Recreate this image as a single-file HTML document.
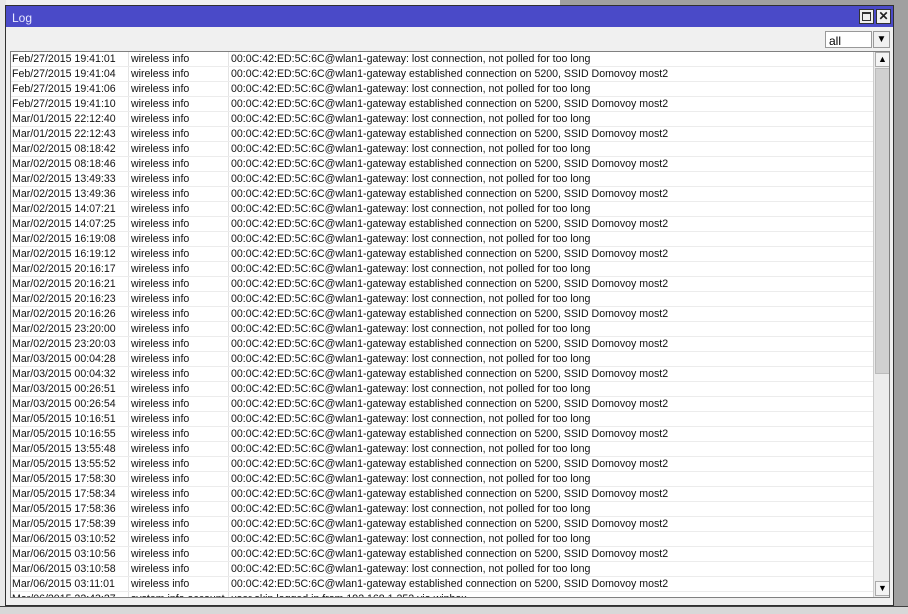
<!DOCTYPE html>
<html><head><meta charset="utf-8"><style>
*{margin:0;padding:0;box-sizing:border-box}
body{width:908px;height:614px;overflow:hidden;background:#a0a0a0;font-family:"Liberation Sans",sans-serif;font-size:10.6px;position:relative}
.under{position:absolute;left:0;top:0;width:560px;height:6px;background:#f0f0f0}
.under2{position:absolute;left:0;top:0;width:6px;height:614px;background:#e8e8e8}
.bot{position:absolute;left:0;top:606px;width:908px;height:8px;background:#d8d8d8;border-top:1px solid #404040}
.win{position:absolute;left:5px;top:5px;width:889px;height:601px;background:#f0f0f0;border:1px solid #303030}
.title{position:absolute;left:0;top:0;width:887px;height:21px;background:#4a4ac8;color:#e8e8ff;font-size:12px;padding:5px 0 0 6px}
.tb{position:absolute;top:3px;width:15px;height:15px;background:#f0f0f0;border:1px solid #333}
.sel{position:absolute;left:819px;top:25px;width:47px;height:17px;background:#fff;border:1px solid #999;font-size:12px;padding:2px 0 0 3px}
.selb{position:absolute;left:867px;top:25px;width:17px;height:17px;background:#f0f0f0;border:1px solid #999;font-size:10px;text-align:center;line-height:15px}
.list{position:absolute;left:4px;top:45px;width:880px;height:547px;background:#fff;border:1px solid #808080;overflow:hidden}
.row{height:15px;border-bottom:1px solid #ececec;white-space:nowrap;position:relative;line-height:14px;color:#111}
.row span{position:absolute;top:0}
.a{left:1px}.b{left:117px;border-left:1px solid #e4e4e4;padding-left:2px;height:14px}.c{left:217px;border-left:1px solid #e4e4e4;padding-left:2px;height:14px}
.sb{position:absolute;left:862px;top:0;width:17px;height:545px;background:#ececec;border-left:1px solid #ccc}
.thumb{position:absolute;left:1px;top:16px;width:15px;height:306px;background:#d0d0d0;border:1px solid #bbb}
.arr{position:absolute;left:1px;width:15px;height:15px;background:#f4f4f4;border:1px solid #aaa;font-size:9px;text-align:center;line-height:13px}
</style></head><body>
<div class="under"></div><div class="under2"></div><div class="bot"></div>
<div class="win">
<div class="title">Log
<div class="tb" style="left:853px"><div style="position:absolute;left:2px;top:2px;width:9px;height:9px;border:1px solid #333;border-top-width:2px"></div></div>
<div class="tb" style="left:870px;color:#222;font-size:12px;font-weight:bold;text-align:center;line-height:13px">✕</div>
</div>
<div class="sel">all</div><div class="selb">▼</div>
<div class="list">
<div class="row"><span class="a">Feb/27/2015 19:41:01</span><span class="b">wireless info</span><span class="c">00:0C:42:ED:5C:6C@wlan1-gateway: lost connection, not polled for too long</span></div>
<div class="row"><span class="a">Feb/27/2015 19:41:04</span><span class="b">wireless info</span><span class="c">00:0C:42:ED:5C:6C@wlan1-gateway established connection on 5200, SSID Domovoy most2</span></div>
<div class="row"><span class="a">Feb/27/2015 19:41:06</span><span class="b">wireless info</span><span class="c">00:0C:42:ED:5C:6C@wlan1-gateway: lost connection, not polled for too long</span></div>
<div class="row"><span class="a">Feb/27/2015 19:41:10</span><span class="b">wireless info</span><span class="c">00:0C:42:ED:5C:6C@wlan1-gateway established connection on 5200, SSID Domovoy most2</span></div>
<div class="row"><span class="a">Mar/01/2015 22:12:40</span><span class="b">wireless info</span><span class="c">00:0C:42:ED:5C:6C@wlan1-gateway: lost connection, not polled for too long</span></div>
<div class="row"><span class="a">Mar/01/2015 22:12:43</span><span class="b">wireless info</span><span class="c">00:0C:42:ED:5C:6C@wlan1-gateway established connection on 5200, SSID Domovoy most2</span></div>
<div class="row"><span class="a">Mar/02/2015 08:18:42</span><span class="b">wireless info</span><span class="c">00:0C:42:ED:5C:6C@wlan1-gateway: lost connection, not polled for too long</span></div>
<div class="row"><span class="a">Mar/02/2015 08:18:46</span><span class="b">wireless info</span><span class="c">00:0C:42:ED:5C:6C@wlan1-gateway established connection on 5200, SSID Domovoy most2</span></div>
<div class="row"><span class="a">Mar/02/2015 13:49:33</span><span class="b">wireless info</span><span class="c">00:0C:42:ED:5C:6C@wlan1-gateway: lost connection, not polled for too long</span></div>
<div class="row"><span class="a">Mar/02/2015 13:49:36</span><span class="b">wireless info</span><span class="c">00:0C:42:ED:5C:6C@wlan1-gateway established connection on 5200, SSID Domovoy most2</span></div>
<div class="row"><span class="a">Mar/02/2015 14:07:21</span><span class="b">wireless info</span><span class="c">00:0C:42:ED:5C:6C@wlan1-gateway: lost connection, not polled for too long</span></div>
<div class="row"><span class="a">Mar/02/2015 14:07:25</span><span class="b">wireless info</span><span class="c">00:0C:42:ED:5C:6C@wlan1-gateway established connection on 5200, SSID Domovoy most2</span></div>
<div class="row"><span class="a">Mar/02/2015 16:19:08</span><span class="b">wireless info</span><span class="c">00:0C:42:ED:5C:6C@wlan1-gateway: lost connection, not polled for too long</span></div>
<div class="row"><span class="a">Mar/02/2015 16:19:12</span><span class="b">wireless info</span><span class="c">00:0C:42:ED:5C:6C@wlan1-gateway established connection on 5200, SSID Domovoy most2</span></div>
<div class="row"><span class="a">Mar/02/2015 20:16:17</span><span class="b">wireless info</span><span class="c">00:0C:42:ED:5C:6C@wlan1-gateway: lost connection, not polled for too long</span></div>
<div class="row"><span class="a">Mar/02/2015 20:16:21</span><span class="b">wireless info</span><span class="c">00:0C:42:ED:5C:6C@wlan1-gateway established connection on 5200, SSID Domovoy most2</span></div>
<div class="row"><span class="a">Mar/02/2015 20:16:23</span><span class="b">wireless info</span><span class="c">00:0C:42:ED:5C:6C@wlan1-gateway: lost connection, not polled for too long</span></div>
<div class="row"><span class="a">Mar/02/2015 20:16:26</span><span class="b">wireless info</span><span class="c">00:0C:42:ED:5C:6C@wlan1-gateway established connection on 5200, SSID Domovoy most2</span></div>
<div class="row"><span class="a">Mar/02/2015 23:20:00</span><span class="b">wireless info</span><span class="c">00:0C:42:ED:5C:6C@wlan1-gateway: lost connection, not polled for too long</span></div>
<div class="row"><span class="a">Mar/02/2015 23:20:03</span><span class="b">wireless info</span><span class="c">00:0C:42:ED:5C:6C@wlan1-gateway established connection on 5200, SSID Domovoy most2</span></div>
<div class="row"><span class="a">Mar/03/2015 00:04:28</span><span class="b">wireless info</span><span class="c">00:0C:42:ED:5C:6C@wlan1-gateway: lost connection, not polled for too long</span></div>
<div class="row"><span class="a">Mar/03/2015 00:04:32</span><span class="b">wireless info</span><span class="c">00:0C:42:ED:5C:6C@wlan1-gateway established connection on 5200, SSID Domovoy most2</span></div>
<div class="row"><span class="a">Mar/03/2015 00:26:51</span><span class="b">wireless info</span><span class="c">00:0C:42:ED:5C:6C@wlan1-gateway: lost connection, not polled for too long</span></div>
<div class="row"><span class="a">Mar/03/2015 00:26:54</span><span class="b">wireless info</span><span class="c">00:0C:42:ED:5C:6C@wlan1-gateway established connection on 5200, SSID Domovoy most2</span></div>
<div class="row"><span class="a">Mar/05/2015 10:16:51</span><span class="b">wireless info</span><span class="c">00:0C:42:ED:5C:6C@wlan1-gateway: lost connection, not polled for too long</span></div>
<div class="row"><span class="a">Mar/05/2015 10:16:55</span><span class="b">wireless info</span><span class="c">00:0C:42:ED:5C:6C@wlan1-gateway established connection on 5200, SSID Domovoy most2</span></div>
<div class="row"><span class="a">Mar/05/2015 13:55:48</span><span class="b">wireless info</span><span class="c">00:0C:42:ED:5C:6C@wlan1-gateway: lost connection, not polled for too long</span></div>
<div class="row"><span class="a">Mar/05/2015 13:55:52</span><span class="b">wireless info</span><span class="c">00:0C:42:ED:5C:6C@wlan1-gateway established connection on 5200, SSID Domovoy most2</span></div>
<div class="row"><span class="a">Mar/05/2015 17:58:30</span><span class="b">wireless info</span><span class="c">00:0C:42:ED:5C:6C@wlan1-gateway: lost connection, not polled for too long</span></div>
<div class="row"><span class="a">Mar/05/2015 17:58:34</span><span class="b">wireless info</span><span class="c">00:0C:42:ED:5C:6C@wlan1-gateway established connection on 5200, SSID Domovoy most2</span></div>
<div class="row"><span class="a">Mar/05/2015 17:58:36</span><span class="b">wireless info</span><span class="c">00:0C:42:ED:5C:6C@wlan1-gateway: lost connection, not polled for too long</span></div>
<div class="row"><span class="a">Mar/05/2015 17:58:39</span><span class="b">wireless info</span><span class="c">00:0C:42:ED:5C:6C@wlan1-gateway established connection on 5200, SSID Domovoy most2</span></div>
<div class="row"><span class="a">Mar/06/2015 03:10:52</span><span class="b">wireless info</span><span class="c">00:0C:42:ED:5C:6C@wlan1-gateway: lost connection, not polled for too long</span></div>
<div class="row"><span class="a">Mar/06/2015 03:10:56</span><span class="b">wireless info</span><span class="c">00:0C:42:ED:5C:6C@wlan1-gateway established connection on 5200, SSID Domovoy most2</span></div>
<div class="row"><span class="a">Mar/06/2015 03:10:58</span><span class="b">wireless info</span><span class="c">00:0C:42:ED:5C:6C@wlan1-gateway: lost connection, not polled for too long</span></div>
<div class="row"><span class="a">Mar/06/2015 03:11:01</span><span class="b">wireless info</span><span class="c">00:0C:42:ED:5C:6C@wlan1-gateway established connection on 5200, SSID Domovoy most2</span></div>
<div class="row"><span class="a">Mar/06/2015 22:43:27</span><span class="b">system info account</span><span class="c">user skip logged in from 192.168.1.252 via winbox</span></div>
<div class="sb"><div class="arr" style="top:0">▲</div><div class="thumb"></div><div class="arr" style="top:529px">▼</div></div>
</div>
</div>
</body></html>
